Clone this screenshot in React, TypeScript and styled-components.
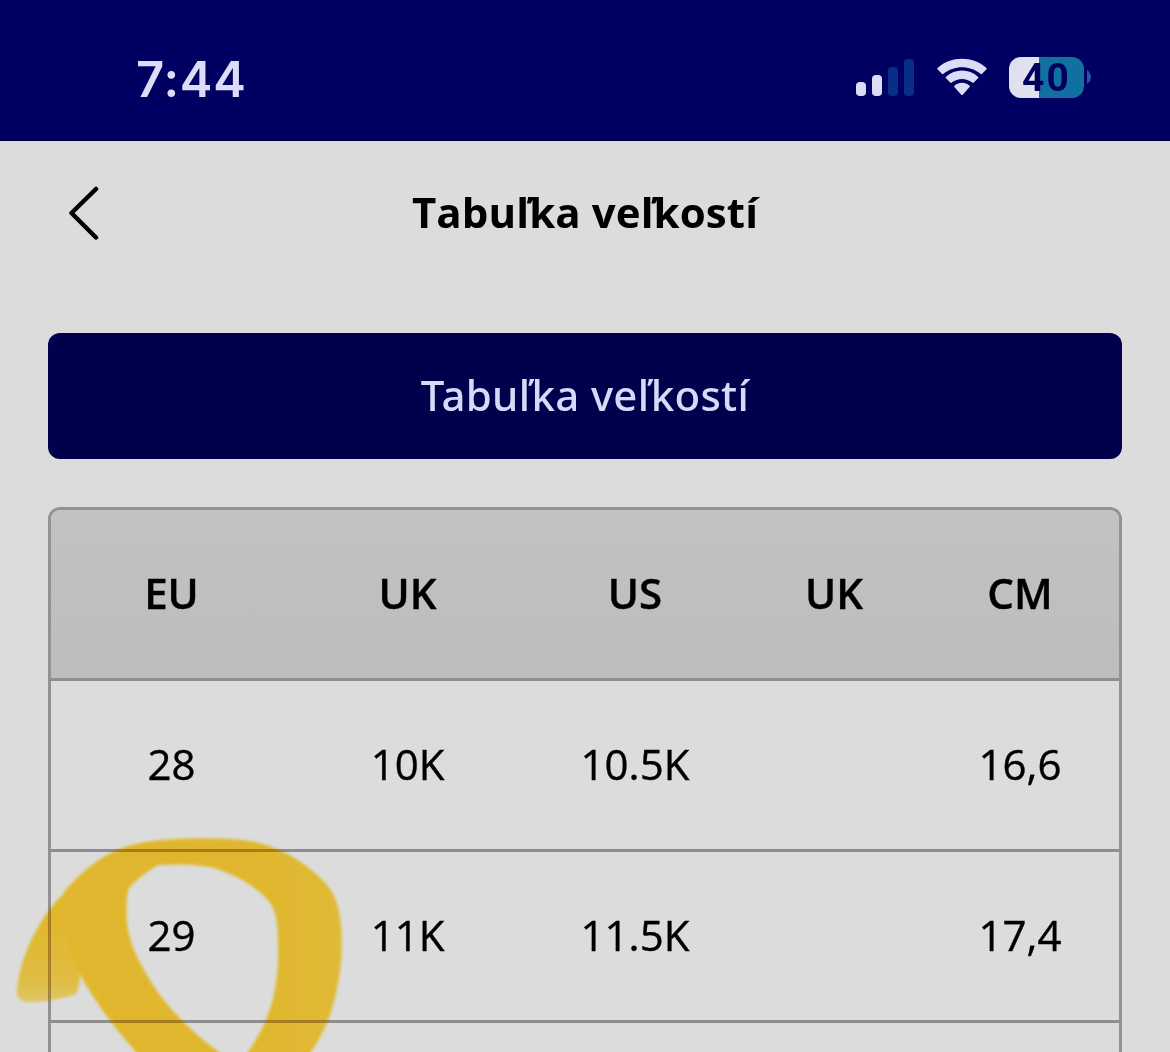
import styled, { createGlobalStyle } from "styled-components";

const EstiloGlobal = createGlobalStyle`
  * {
    box-sizing: border-box;
  }

  body {
    margin: 0;
    background: #dcdcdc;
  }
`;

const Tela = styled.div`
  position: relative;
  width: 1170px;
  height: 1052px;
  overflow: hidden;
  background: #dcdcdc;
  color: #000;
  font-family: "Open Sans", "Noto Sans", sans-serif;
`;

const BarraStatus = styled.header`
  display: flex;
  justify-content: space-between;
  align-items: center;
  height: 141px;
  padding: 14px 79px 0 136px;
  background: #000062;
  border-bottom: 1px solid #00004a;
`;

const Hora = styled.span`
  padding-top: 5px;
  font-family: Inter, sans-serif;
  font-weight: 600;
  font-size: 49px;
  letter-spacing: 0.8px;
  line-height: 60px;
  color: #dcdcf8;
`;

const Indicadores = styled.div`
  display: flex;
  align-items: center;
  gap: 22px;
`;

const Bateria = styled.div`
  display: flex;
  align-items: center;
  gap: 3px;
`;

const CorpoBateria = styled.div<{ $carga: number }>`
  display: flex;
  align-items: center;
  justify-content: center;
  width: 75px;
  height: 41px;
  padding-top: 2px;
  border-radius: 12px;
  background: linear-gradient(90deg, #e0e0ee ${(p) => p.$carga}%, #10709f ${(p) => p.$carga}%);
  font-family: Roboto, sans-serif;
  font-weight: 700;
  font-size: 39px;
  letter-spacing: 2px;
  line-height: 39px;
  color: #00005c;
`;

const Cabecalho = styled.div`
  display: grid;
  grid-template-columns: 72px 1fr 72px;
  align-items: center;
  height: 144px;
  padding: 0 48px;
`;

const BotaoVoltar = styled.button`
  display: flex;
  width: 72px;
  padding: 0 0 0 20px;
  border: 0;
  background: none;
`;

const Titulo = styled.h1`
  margin: 0;
  padding-bottom: 2px;
  font-weight: 700;
  font-size: 42px;
  letter-spacing: 0.1px;
  line-height: 56px;
  text-align: center;
`;

const Conteudo = styled.main`
  display: flex;
  flex-direction: column;
  gap: 48px;
  padding: 48px 48px 0;
`;

const BotaoTabela = styled.button`
  height: 126px;
  padding: 0 0 4px;
  border: 0;
  border-radius: 12px;
  background: #00004d;
  color: #d6dafa;
  font-family: "Noto Sans", "Open Sans", sans-serif;
  font-weight: 500;
  font-size: 42px;
  letter-spacing: 0.3px;
`;

const Tabela = styled.div`
  border: 3px solid #929292;
  border-radius: 12px;
  overflow: hidden;
`;

const Linha = styled.div<{ $titulo?: boolean }>`
  display: grid;
  grid-template-columns: 241px 231px 224px 174px 198px;
  align-items: center;
  height: 171px;
  padding-bottom: 3px;
  border-bottom: 3px solid #8e8e8e;
  background: ${(p) => (p.$titulo ? "linear-gradient(#c2c2c2, #bdbdbd)" : "transparent")};
  font-weight: ${(p) => (p.$titulo ? 600 : 400)};
  font-size: 42px;
  -webkit-text-stroke: 0.4px #000;
`;

const Celula = styled.span`
  text-align: center;
`;

const Marcador = styled.svg<{ $mistura?: string }>`
  position: absolute;
  left: 0;
  top: 820px;
  mix-blend-mode: ${(p) => p.$mistura ?? "normal"};
  pointer-events: none;
`;

const colunas = ["EU", "UK", "US", "UK", "CM"];

const tamanhos = [
  ["28", "10K", "10.5K", "", "16,6"],
  ["29", "11K", "11.5K", "", "17,4"],
  ["", "", "", "", ""],
];

function IconeSinal() {
  return (
    <svg width="60" height="40" viewBox="0 0 60 40">
      <rect x="1" y="25" width="10" height="14" rx="4" fill="#dcdcf6" />
      <rect x="17" y="18" width="10" height="21" rx="4" fill="#dcdcf6" />
      <rect x="33" y="10" width="10" height="29" rx="4" fill="#082e88" />
      <rect x="49" y="2" width="10" height="37" rx="4" fill="#082e88" />
    </svg>
  );
}

function IconeWifi() {
  return (
    <svg width="50" height="40" viewBox="0 0 50 40" fill="#dcdcf6">
      <path d="M.5 12.3Q0 11.5.8 10.8C14-1.2 36-1.2 49.2 10.8Q50 11.5 49.5 12.3L45.1 16.8Q44.3 17.5 43.5 16.8C33 8 17 8 6.5 16.8Q5.7 17.5 4.9 16.8Z" />
      <path d="M8.8 21.1Q8.2 20.4 9 19.7C18 11.5 32 11.5 41 19.7Q41.8 20.4 41.2 21.1L36.8 25.6Q36 26.3 35.2 25.6C29 20.8 21 20.8 14.8 25.6Q14 26.3 13.2 25.6Z" />
      <path d="M17.4 30.1Q16.7 29.3 17.6 28.5C22 24.7 28 24.7 32.4 28.5Q33.3 29.3 32.6 30.1L25.8 37.7Q25 38.5 24.2 37.7Z" />
    </svg>
  );
}

interface ITraco {
  id: string;
  cor: string;
  opacidade?: number;
  mistura?: string;
}

// Traço de marca-texto em volta do tamanho 29
function Traco({ id, cor, opacidade = 1, mistura }: ITraco) {
  return (
    <Marcador $mistura={mistura} width="370" height="232" viewBox="0 0 370 232" opacity={opacidade}>
      <defs>
        <linearGradient id={`${id}-ponta`} x1="0" y1="0" x2="0" y2="1">
          <stop offset="0.3" stopColor={cor} stopOpacity="1" />
          <stop offset="0.8" stopColor={cor} stopOpacity="0.85" />
          <stop offset="1" stopColor={cor} stopOpacity="0.6" />
        </linearGradient>
        <linearGradient id={`${id}-volta`} x1="0" y1="0" x2="1" y2="0">
          <stop offset="0.7" stopColor={cor} stopOpacity="1" />
          <stop offset="1" stopColor={cor} stopOpacity="0.93" />
        </linearGradient>
        <filter id={`${id}-borda`} x="-5%" y="-5%" width="110%" height="110%">
          <feGaussianBlur stdDeviation="1.4" />
        </filter>
      </defs>
      <g filter={`url(#${id}-borda)`}>
        <path d="M66 72C44 90 18 136 17 174Q18 183 34 182C50 181 63 178 74 175Q79 172 80 156L96 130Z" fill={`url(#${id}-ponta)`} />
        <path
          fillRule="evenodd"
          fill={`url(#${id}-volta)`}
          d="M64 72C85 48 106 31 136 24C168 17 215 18 242 20C260 22 274 27 289 35C310 47 329 63 335 78C343 99 343 134 339 157C334 187 327 211 305 240H144C122 218 96 184 80 154C64 122 60 97 64 72ZM128 69Q139 56 158 45C180 44 205 44 220 50C243 58 258 69 268 80Q278 91 278 120C280 160 274 200 242 240H232C205 225 179 200 158 173C137 139 121 117 128 69Z"
        />
      </g>
    </Marcador>
  );
}

export default function App() {
  return (
    <Tela>
      <EstiloGlobal />
      <BarraStatus>
        <Hora>7:44</Hora>
        <Indicadores>
          <IconeSinal />
          <IconeWifi />
          <Bateria>
            <CorpoBateria $carga={40}>40</CorpoBateria>
            <svg width="4" height="14" viewBox="0 0 4 14">
              <path d="M0 0Q4 3 4 7T0 14Z" fill="#27579a" />
            </svg>
          </Bateria>
        </Indicadores>
      </BarraStatus>

      <Cabecalho>
        <BotaoVoltar aria-label="Späť">
          <svg width="32" height="54" viewBox="0 0 32 54" fill="none" stroke="#000" strokeWidth="4.5" strokeLinecap="round" strokeLinejoin="round">
            <path d="M28 3 3.5 27 28 51.5" />
          </svg>
        </BotaoVoltar>
        <Titulo>Tabuľka veľkostí</Titulo>
      </Cabecalho>

      <Conteudo>
        <BotaoTabela>Tabuľka veľkostí</BotaoTabela>
        <Tabela>
          <Linha $titulo>
            {colunas.map((coluna, i) => (
              <Celula key={i}>{coluna}</Celula>
            ))}
          </Linha>
          {tamanhos.map((linha, i) => (
            <Linha key={i}>
              {linha.map((valor, j) => (
                <Celula key={j}>{valor}</Celula>
              ))}
            </Linha>
          ))}
        </Tabela>
      </Conteudo>

      <Traco id="base" cor="#ffff47" mistura="multiply" />
      <Traco id="tinta" cor="#ec4800" opacidade={0.25} />
    </Tela>
  );
}
